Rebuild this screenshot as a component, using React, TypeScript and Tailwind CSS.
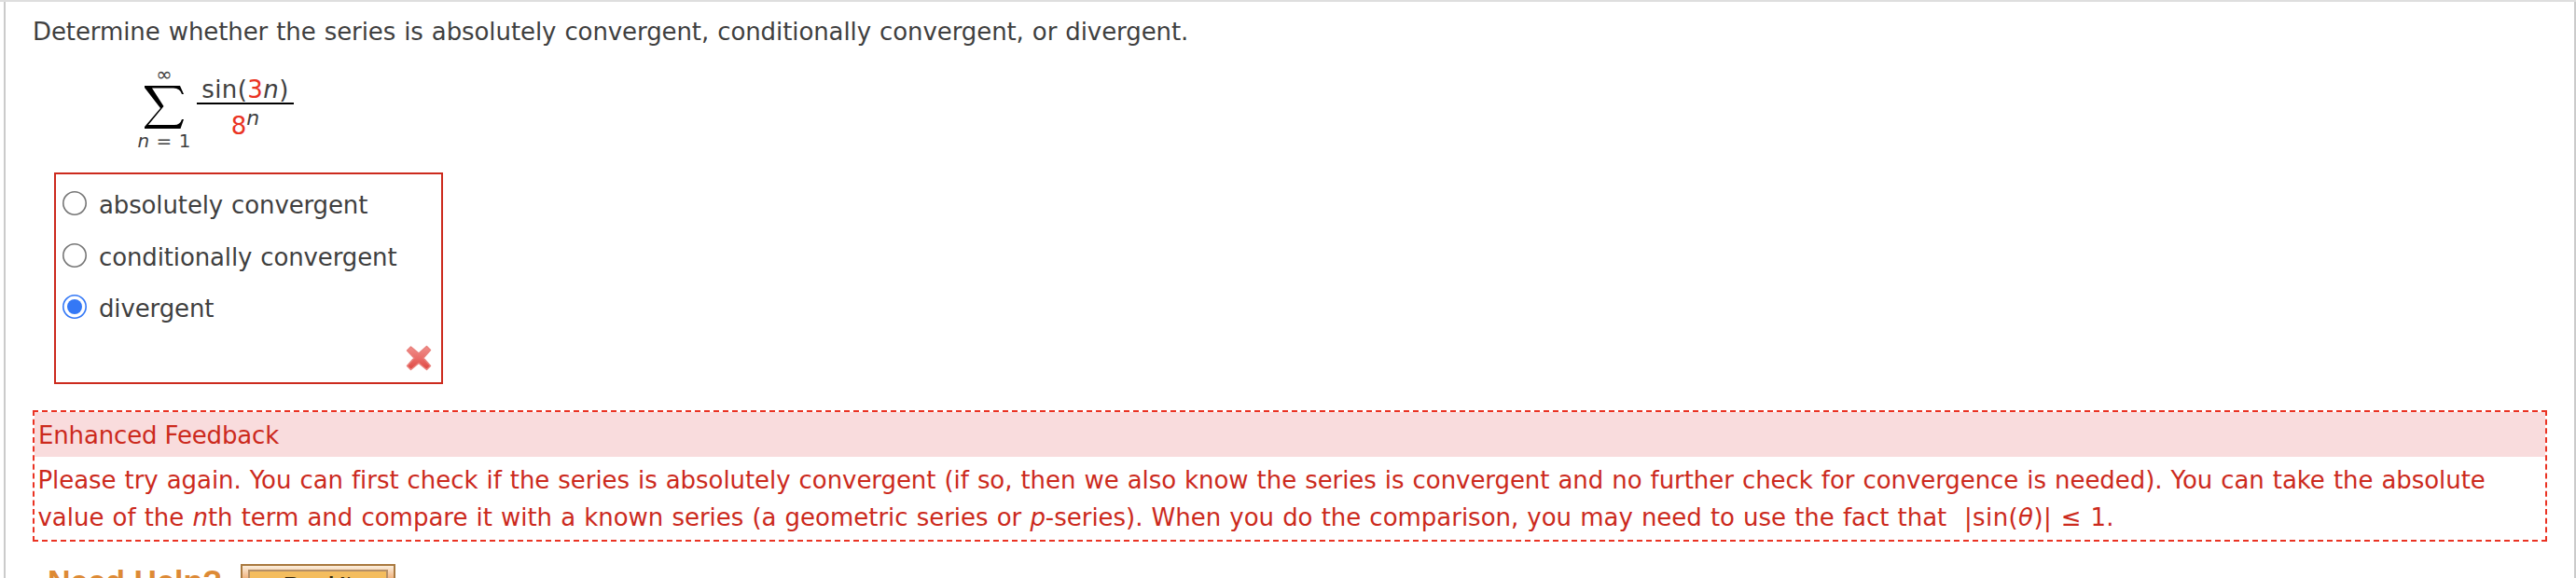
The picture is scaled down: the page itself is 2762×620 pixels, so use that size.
import type { ReactNode } from 'react'

interface Choice {
  id: string
  label: string
  checked?: boolean
}

const choices: Choice[] = [
  { id: 'absolute', label: 'absolutely convergent' },
  { id: 'conditional', label: 'conditionally convergent' },
  { id: 'divergent', label: 'divergent', checked: true },
]

function Line({ children, className = '' }: { children: ReactNode; className?: string }) {
  return <div className={`whitespace-pre ${className}`}>{children}</div>
}

function Radio({ checked }: { checked?: boolean }) {
  return (
    <svg className="h-[26px] w-[26px] shrink-0" viewBox="0 0 26 26" fill="none">
      <circle cx="13" cy="13" r="12.2" stroke={checked ? '#3478f6' : '#767676'} strokeWidth="1.6" />
      {checked && <circle cx="13" cy="13" r="8" fill="#3478f6" />}
    </svg>
  )
}

function WrongMark() {
  return (
    <svg className="h-7 w-7" viewBox="0 0 28 28">
      <defs>
        <linearGradient id="wrong" x1="0" y1="0" x2="0" y2="1">
          <stop offset="0" stopColor="#f08f8b" />
          <stop offset="0.55" stopColor="#e96a66" />
          <stop offset="1" stopColor="#dd4640" />
        </linearGradient>
      </defs>
      <path
        d="M5.500 2L14 9L22.500 1.500L26.500 5.500L19 14L26.500 22.500L22.500 26.500L14 19.500L5.500 26.500L1.500 22.500L9 14L1.500 6Z"
        fill="url(#wrong)"
        stroke="#e9807c"
        strokeWidth="1.5"
        strokeLinejoin="round"
      />
    </svg>
  )
}

function Series() {
  return (
    <div className="flex pl-[132px]">
      <div className="flex w-[64px] flex-col items-center">
        <span className="h-[17px] text-[21px] leading-[17px]">∞</span>
        <svg className="mt-[3px] h-[46px] w-[42px]" viewBox="0 0 42 46">
          <path d="M0 0H38L42 9H40Q38 2.500 31 2.500H8L20.500 22L4 42H32Q38 42 40 36H42L38.500 46H0V44L17 24L0 2Z" fill="#000" />
        </svg>
        <Line className="mt-px text-[20px] leading-6 tracking-[0.1px] [word-spacing:0.9px]"><i>n</i> = 1</Line>
      </div>
      <div className="mt-[14px] ml-[3px] flex w-[104px] flex-col items-center">
        <Line className="h-[26px] w-full border-b-2 border-black text-center leading-[20px] tracking-[0.4px]">
          sin(<span className="text-[#ea3323]">3</span><i>n</i>)
        </Line>
        <Line className="mt-[7px] h-[32px] leading-[32px]">
          <span className="text-[#ea3323]">8</span>
          <i className="relative -top-[10px] text-[22px] leading-none">n</i>
        </Line>
      </div>
    </div>
  )
}

export default function App() {
  return (
    <div className="flex h-[620px] w-[2762px] flex-col overflow-hidden border-t-2 border-[#dedede] bg-white font-['DejaVu_Sans',sans-serif] text-[26px] text-[#3f3f3f]">
      <div className="ml-1 flex flex-1 flex-col border-x-2 border-[#cbcbcb] pt-4 pl-[29px]">
        <Line className="h-[32px] leading-[32px] tracking-[-0.09px] [word-spacing:0.88px]">
          Determine whether the series is absolutely convergent, conditionally convergent, or divergent.
        </Line>
        <div className="mt-[22px] -ml-[29px] h-[113px] pl-[6px]">
          <Series />
        </div>
        <div className="ml-[23px] flex h-[227px] w-[417px] shrink-0 flex-col border-2 border-[#cc2a1d] pt-[18px] pl-[7px]">
          {choices.map((choice) => (
            <div key={choice.id} className="flex h-[55.5px] shrink-0 gap-[13px]">
              <Radio checked={choice.checked} />
              <Line className="leading-[30px] tracking-[-0.13px] [word-spacing:0.88px]">{choice.label}</Line>
            </div>
          ))}
          <div className="-mt-[2px] flex justify-end pr-[10px]">
            <WrongMark />
          </div>
        </div>
        <div className="mt-[28px] h-[141px] w-[2696px] shrink-0 border-2 border-dashed border-[#ea3323] text-[#cc2a1d]">
          <div className="h-12 bg-[#f9dcdd] pl-1 leading-[50px] tracking-[-0.15px]">Enhanced Feedback</div>
          <div className="pl-[3.5px] leading-[40px] [word-spacing:0.88px]">
            <Line className="pt-[5px] tracking-[-0.065px]">
              Please try again. You can first check if the series is absolutely convergent (if so, then we also know the series is convergent and no further check for convergence is needed). You can take the absolute
            </Line>
            <Line className="tracking-[-0.02px]">
              value of the <i>n</i>th term and compare it with a known series (a geometric series or <i>p</i>-series). When you do the comparison, you may need to use the fact that <span className="tracking-[0.4px]"> |sin(<i>θ</i>)| ≤ 1.</span>
            </Line>
          </div>
        </div>
        <div className="mt-6 flex h-[15px] shrink-0">
          <div className="mt-px ml-4 w-[207px] font-['Liberation_Sans',sans-serif] text-[34px] leading-[34px] font-bold text-[#dd8a35]">Need Help?</div>
          <div className="h-12 w-[166px] border-2 border-[#a9793f] bg-linear-to-b from-[#fbeedd] to-[#e58a30] to-50% px-[6px] pt-1">
            <div className="h-9 border-2 border-[#b58f66] bg-[#f4bd5e] text-center font-['Liberation_Sans',sans-serif] text-[22px] leading-[28px] font-bold text-[#33260c]">Read It</div>
          </div>
        </div>
      </div>
    </div>
  )
}
